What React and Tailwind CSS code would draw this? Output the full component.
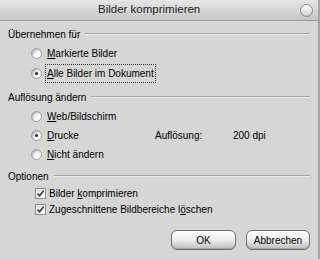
import React from 'react';

const Radio = ({ checked }) => (
  <span className="relative flex h-[11px] w-[11px] items-center justify-center rounded-full border border-[#9c9c9c] bg-gradient-to-br from-[#c8c8c8] via-[#f4f4f4] to-white shadow-[inset_1px_1px_1px_rgba(0,0,0,0.15)]">
    {checked && <span className="h-[3px] w-[3px] rounded-full bg-[#222]"></span>}
  </span>
);

const Check = () => (
  <span className="flex h-[11px] w-[11px] items-center justify-center border border-[#8c8c8c] bg-gradient-to-br from-[#dcdcdc] to-white">
    <svg width="9" height="9" viewBox="0 0 9 9">
      <path d="M1.5 4.5 L3.6 6.8 L7.8 1.6" fill="none" stroke="#3a3a3a" strokeWidth="1.6" />
    </svg>
  </span>
);

const Header = ({ children }) => (
  <div className="flex h-[14px] items-center pl-[8px] pr-[8px]">
    <span>{children}</span>
    <span className="ml-[5px] flex flex-1 flex-col">
      <span className="h-px bg-[#a4a4a4]"></span>
      <span className="h-px bg-[#ececec]"></span>
    </span>
  </div>
);

export default function App() {
  return (
    <div
      className="flex h-[259px] w-[320px] flex-col overflow-hidden border-r-2 border-[#a6a6a6] bg-[#d6d6d6] text-[10px] text-black"
      style={{ fontFamily: '"Liberation Sans", Arial, sans-serif' }}
    >
      {/* Title bar */}
      <div className="flex h-[21px] items-center border-b border-[#9c9c9c] bg-gradient-to-b from-[#e6e6e6] to-[#c6c6c6] pl-[98px] pr-[5px]">
        <span className="text-[11.5px] text-[#222]">Bilder komprimieren</span>
        <span className="ml-auto h-[13px] w-[13px] rounded-full border border-[#8a8a8a] bg-gradient-to-b from-white to-[#d0d0d0]"></span>
      </div>

      <div className="mt-[6px]">
        <Header>Übernehmen für</Header>
      </div>
      <div className="mt-[2px] flex h-[20px] items-center pl-[31px]">
        <Radio />
        <span className="ml-[5px]"><u>M</u>arkierte Bilder</span>
      </div>
      <div className="flex h-[20px] items-center pl-[31px]">
        <Radio checked />
        <span className="ml-[3px] border border-dotted border-[#333] px-[1px] py-[1px]"><u>A</u>lle Bilder im Dokument</span>
      </div>

      <div className="mt-[7px]">
        <Header>Auflösung ändern</Header>
      </div>
      <div className="mt-[3px] flex h-[19px] items-center pl-[31px]">
        <Radio />
        <span className="ml-[5px]"><u>W</u>eb/Bildschirm</span>
      </div>
      <div className="flex h-[19px] items-center pl-[31px]">
        <Radio checked />
        <span className="ml-[5px] w-[108px]"><u>D</u>rucke</span>
        <span className="w-[78px]">Auflösung:</span>
        <span>200 dpi</span>
      </div>
      <div className="flex h-[19px] items-center pl-[31px]">
        <Radio />
        <span className="ml-[5px]"><u>N</u>icht ändern</span>
      </div>

      <div className="mt-[5px]">
        <Header>Optionen</Header>
      </div>
      <div className="mt-[2px] flex h-[16px] items-center pl-[35px]">
        <Check />
        <span className="ml-[3px]">Bilder <u>k</u>omprimieren</span>
      </div>
      <div className="flex h-[16px] items-center pl-[35px]">
        <Check />
        <span className="ml-[3px]">Zugeschnittene Bildbereiche l<u>ö</u>schen</span>
      </div>

      <div className="mt-[13px] flex justify-end gap-[10px] pr-[8px]">
        <button className="flex h-[20px] w-[65px] items-center justify-center rounded-[6px] border border-[#6e6e6e] bg-gradient-to-b from-white via-[#ececec] to-[#bdbdbd] shadow-[inset_0_-1px_0_#a8a8a8]">
          OK
        </button>
        <button className="flex h-[20px] w-[64px] items-center justify-center rounded-[6px] border border-[#6e6e6e] bg-gradient-to-b from-white via-[#ececec] to-[#bdbdbd] shadow-[inset_0_-1px_0_#a8a8a8]">
          Abbrechen
        </button>
      </div>
    </div>
  );
}
